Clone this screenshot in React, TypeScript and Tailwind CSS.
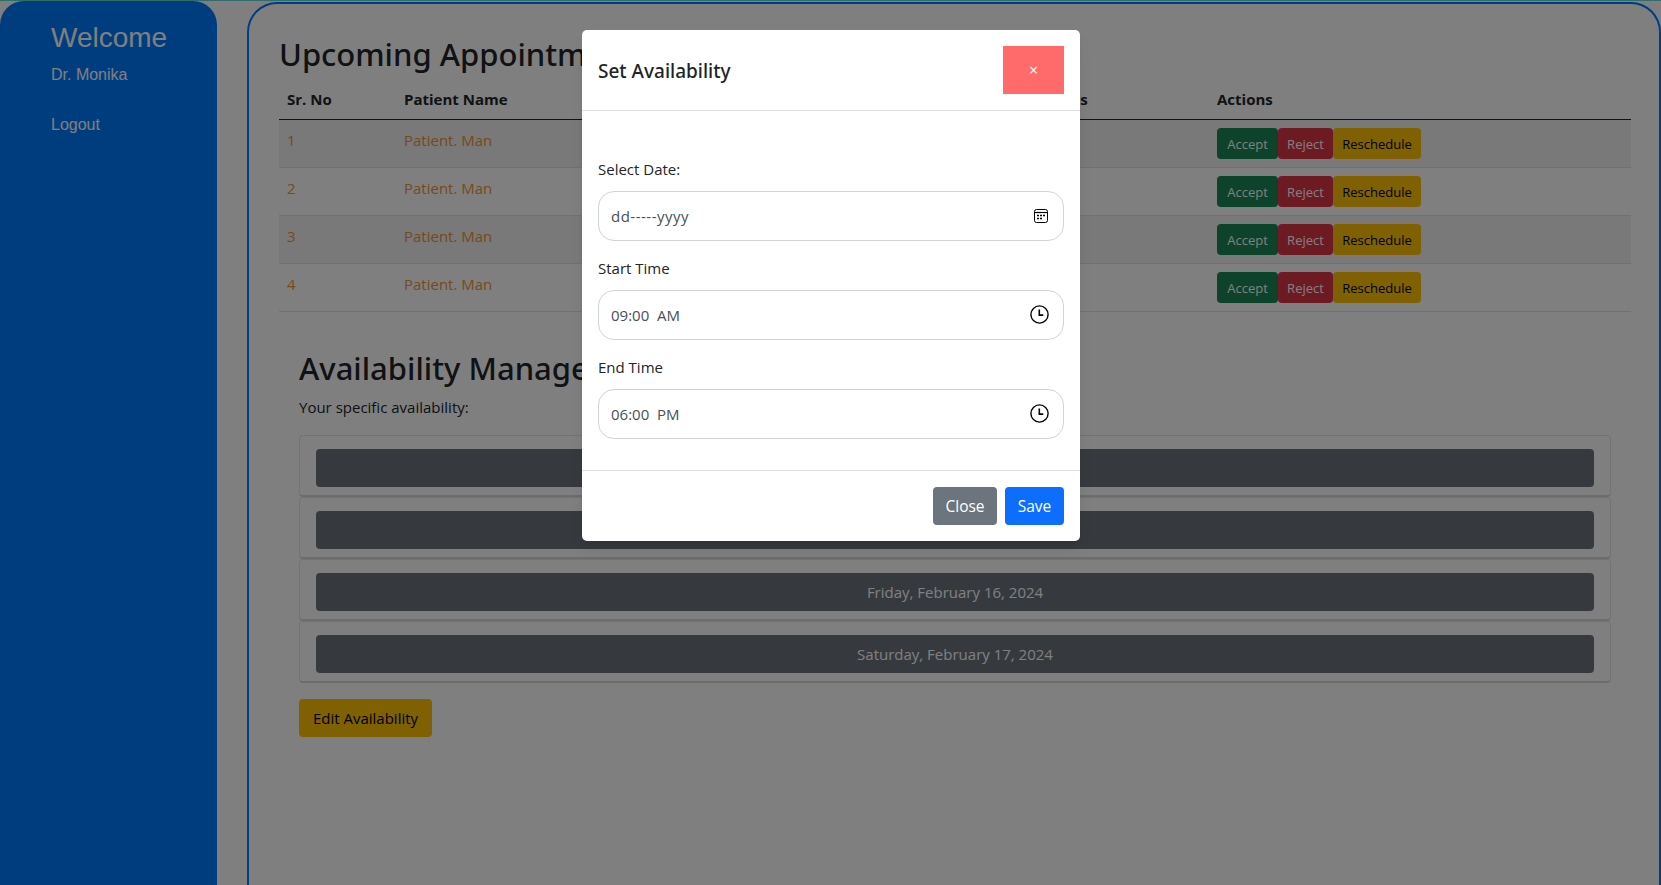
const rows = [1, 2, 3, 4];
const days = ["", "", "Friday, February 16, 2024", "Saturday, February 17, 2024"];

function RowActions() {
  return (
    <div className="flex text-[13px] leading-[21px]">
      <button className="h-[31px] w-[61px] rounded bg-[#198754] pt-[2px] text-white">Accept</button>
      <button className="h-[31px] w-[55px] rounded bg-[#dc3545] pt-[2px] text-white">Reject</button>
      <button className="h-[31px] w-[88px] rounded bg-[#ffc107] pt-[2px] text-black">Reschedule</button>
    </div>
  );
}

function CalendarIcon() {
  return (
    <svg width="14" height="14" viewBox="0 0 14 14" fill="none" stroke="black">
      <rect x="0.5" y="0.5" width="13" height="13" rx="2" />
      <path d="M1 3.5h12" strokeWidth="1.2" />
      <path d="M3 6.5h2M6 6.5h2M9 6.5h2M3 9.5h2M6 9.5h2" strokeWidth="1.5" />
    </svg>
  );
}

function ClockIcon() {
  return (
    <svg className="mb-[2px]" width="19" height="19" viewBox="0 0 19 19" fill="none" stroke="black" strokeWidth="1.4">
      <circle cx="9.5" cy="9.5" r="8.6" />
      <path d="M9.3 4.5v5.6h4" strokeWidth="1.6" />
    </svg>
  );
}

function TimeField({ label, value }: { label: string; value: string }) {
  return (
    <div className="mb-[15px]">
      <div className="mb-[10px] leading-6 text-[#212529]">{label}</div>
      <div className="flex h-[50px] items-center justify-between rounded-[16px] border border-[#ced4da] pr-[14px] pl-3 text-[#495057]">
        <span className="whitespace-pre">{value}</span>
        <ClockIcon />
      </div>
    </div>
  );
}

export default function App() {
  return (
    <div className="relative h-[885px] overflow-hidden bg-white font-['Open_Sans','Noto_Sans',sans-serif] text-[15px] text-[#212529]">
      <div className="h-px bg-[#66d9d9]" />
      <div className="flex h-[884px]">
        <aside className="h-full w-[217px] shrink-0 rounded-t-[24px] bg-[#007bff] pt-[19px] pl-[51px] font-['Liberation_Sans',sans-serif] text-base text-white">
          <h1 className="text-[28px] leading-9">Welcome</h1>
          <p className="mt-[7px] leading-6">Dr. Monika</p>
          <p className="mt-[26px] leading-6">Logout</p>
        </aside>

        <main className="mt-px ml-[30px] flex-1 rounded-t-[30px] border-x-2 border-t-2 border-[#007bff] pt-[31px] pr-[28px] pl-[30px]">
          <h2 className="mb-[6px] font-['Noto_Sans',sans-serif] text-[31px] leading-[38px] font-medium">Upcoming Appointments</h2>
          <table className="w-full table-fixed border-collapse text-left">
            <thead>
              <tr className="h-[40px] border-b border-[#212529]">
                <th className="w-[117px] px-2 font-bold">Sr. No</th>
                <th className="w-[236px] px-2 font-bold">Patient Name</th>
                <th className="w-[200px] px-2 font-bold">Date</th>
                <th className="w-[200px] px-2 font-bold">Time</th>
                <th className="w-[185px] px-2 font-bold">Status</th>
                <th className="px-0 font-bold">Actions</th>
              </tr>
            </thead>
            <tbody>
              {rows.map((n) => (
                <tr key={n} className="h-12 border-b border-[#dee2e6] align-top odd:bg-black/5">
                  <td className="px-2 py-2 leading-6 text-[#ef9434]">{n}</td>
                  <td className="px-2 py-2 leading-6 text-[#ef9434]">Patient. Man</td>
                  <td />
                  <td />
                  <td />
                  <td className="py-2">
                    <RowActions />
                  </td>
                </tr>
              ))}
            </tbody>
          </table>

          <section className="mt-[32px] mr-5 ml-5">
            <h2 className="font-['Noto_Sans',sans-serif] text-[31px] leading-[48px] font-medium">Availability Management</h2>
            <p className="mt-[3px] leading-6">Your specific availability:</p>
            <div className="mt-4 flex flex-col">
              {days.map((day, i) => (
                <div key={i} className="h-[62px] rounded border border-b-2 border-black/10 border-b-black/15 px-4 pt-[13px]">
                  <div className="flex h-[38px] items-center justify-center rounded bg-[#6c757d] pt-px text-white">{day}</div>
                </div>
              ))}
            </div>
            <button className="mt-[16px] h-[38px] w-[133px] rounded bg-[#ffc107] pt-px text-black">Edit Availability</button>
          </section>
        </main>
      </div>

      <div className="absolute inset-0 bg-black/50" />

      <div className="absolute top-[30px] left-[582px] h-[511px] w-[498px] rounded-[5px] bg-white shadow-lg">
        <div className="flex h-[81px] items-center justify-between border-b border-[#dee2e6] px-4">
          <h3 className="pt-[3px] font-['Noto_Sans',sans-serif] text-[19px] font-medium">Set Availability</h3>
          <button className="h-12 w-[61px] bg-[#ff6b6b] text-base font-medium text-white">×</button>
        </div>
        <div className="px-4 pt-[46px] pb-[16px]">
          <div className="mb-[15px]">
            <div className="mb-[10px] leading-6">Select Date:</div>
            <div className="flex h-[50px] items-center justify-between rounded-[16px] border border-[#ced4da] pr-[15px] pl-3 text-[#495057]">
              <span className="tracking-[0.5px]">dd-----yyyy</span>
              <CalendarIcon />
            </div>
          </div>
          <TimeField label="Start Time" value="09:00  AM" />
          <TimeField label="End Time" value="06:00  PM" />
        </div>
        <div className="flex justify-end gap-2 border-t border-[#dee2e6] px-4 pt-4 text-[15.5px]">
          <button className="h-[38px] w-16 rounded bg-[#6c757d] pt-px text-white">Close</button>
          <button className="h-[38px] w-[59px] rounded bg-[#0d6efd] pt-px text-white">Save</button>
        </div>
      </div>
    </div>
  );
}
